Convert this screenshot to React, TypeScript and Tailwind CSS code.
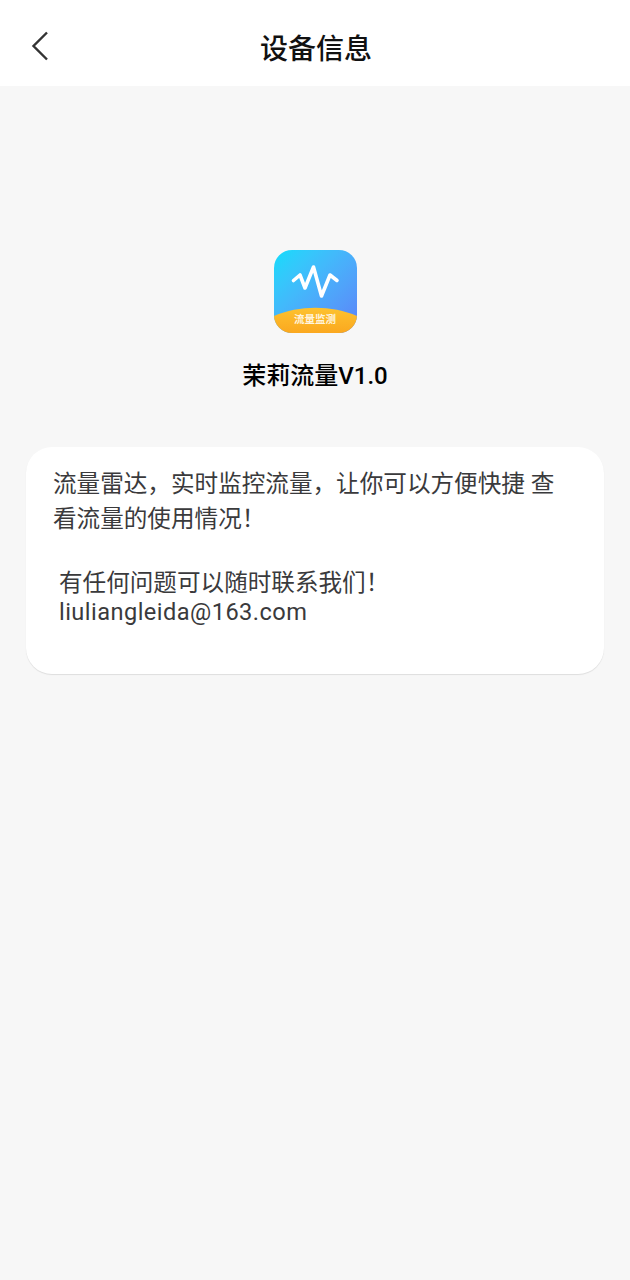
export default function App() {
  return (
    <div className="flex min-h-[1280px] w-full flex-col bg-[#f7f7f7] font-['Roboto','Noto_Sans_CJK_SC',sans-serif]">
      <header className="flex h-[86px] items-center bg-white pt-[8px]">
        <button type="button" className="ml-[31px] h-[30px] w-[18px] -translate-y-[1px] text-[#333333]">
          <svg viewBox="0 0 18 30" className="h-[30px] w-[18px]" fill="none" stroke="currentColor" strokeWidth="2.4">
            <path d="M16 1.5 2.5 15 16 28.5" />
          </svg>
        </button>
        <h1 className="ml-[211px] translate-y-[3px] text-[28px] leading-none font-medium text-[#111111]">设备信息</h1>
      </header>

      <div className="mt-[164px] flex flex-col items-center">
        <AppIcon />
        <p className="mt-[28px] text-[24px] leading-[30px] font-medium text-black">茉莉流量V1.0</p>
      </div>

      <section className="mx-[26px] mt-[56px] h-[227px] w-[578px] rounded-[26px] bg-white pt-[20px] pl-[27px] text-[23.6px] text-[#3a3a3c] shadow-[0_1px_1px_rgba(0,0,0,0.1)]">
        <p className="w-[510px] leading-[35px]">流量雷达，实时监控流量，让你可以方便快捷 查看流量的使用情况！</p>
        <p className="mt-[32px] pl-[6px] leading-[29px]">
          有任何问题可以随时联系我们！
          <br />
          <span className="tracking-[0.45px]">liuliangleida@163.com</span>
        </p>
      </section>
    </div>
  )
}

function AppIcon() {
  return (
    <div className="relative h-[83px] w-[83px] overflow-hidden rounded-[18px] bg-gradient-to-br from-[#06dcfb] to-[#5c80f8]">
      <svg viewBox="0 0 83 83" className="h-[83px] w-[83px]" fill="none">
        <defs>
          <linearGradient id="band" x1="0" y1="0" x2="0" y2="1">
            <stop offset="0" stopColor="#fdc22f" />
            <stop offset="1" stopColor="#fba81f" />
          </linearGradient>
        </defs>
        <path
          d="M19.5 30.5 L26 25 L31 38 L39.5 17 L47.5 46 L56 25 L63 30.5"
          stroke="white"
          strokeWidth="3.6"
          strokeLinecap="round"
          strokeLinejoin="round"
        />
        <path d="M0 66 C 25 55, 58 55, 83 66 V83 H0 Z" fill="url(#band)" />
      </svg>
      <span className="absolute inset-x-0 bottom-[6px] text-center text-[10.5px] leading-[14px] font-bold text-[#fff4dc]">流量监测</span>
    </div>
  )
}
